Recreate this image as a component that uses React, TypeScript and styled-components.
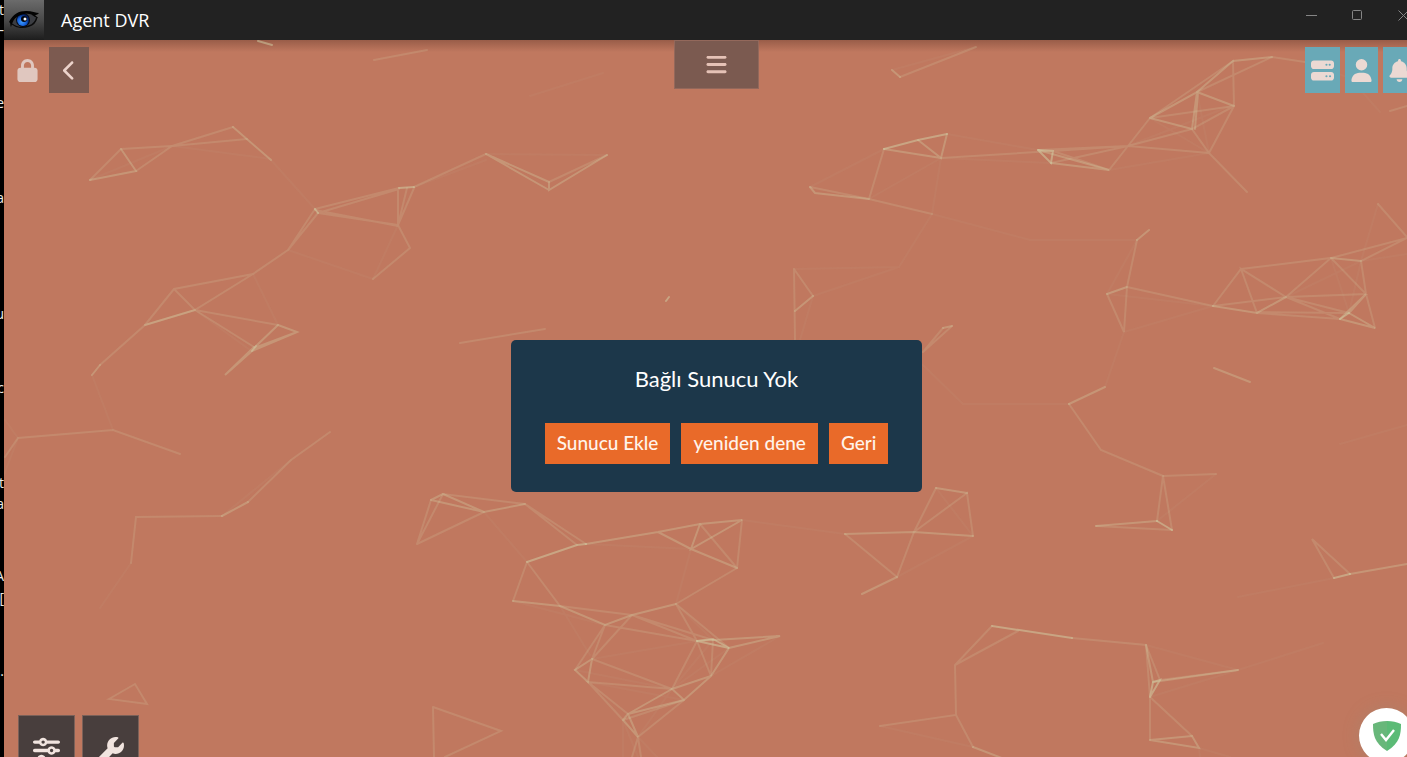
import React from "react";
import styled, { createGlobalStyle, css } from "styled-components";
import {
  FaBars,
  FaBell,
  FaChevronLeft,
  FaLock,
  FaServer,
  FaSliders,
  FaUser,
  FaWrench,
} from "react-icons/fa6";

const GlobalStyle = createGlobalStyle`
  * { box-sizing: border-box; }
  body {
    margin: 0;
    background: #000;
    font-family: Lato, "Liberation Sans", sans-serif;
    overflow: hidden;
  }
  button { font: inherit; margin: 0; padding: 0; border: 0; cursor: pointer; }
`;

const Desktop = styled.div`
  display: grid;
  grid-template-columns: 4px minmax(0, 1fr);
  height: 100vh;
  overflow: hidden;
`;

/* Slice of the window behind, of which only the right edge shows. */
const BehindStrip = styled.aside`
  overflow: hidden;
  background: #000;
  color: #e8e8e8;
  font: 14px/20px "Open Sans", "Liberation Sans", sans-serif;
`;

const BehindLine = styled.div<{ $gap: number }>`
  display: flex;
  justify-content: flex-end;
  height: 20px;
  margin-top: ${(p) => p.$gap}px;
`;

/* The application window runs past the right and bottom edges of the screen. */
const AppWindow = styled.div`
  display: flex;
  flex-direction: column;
  width: calc(100% + 22px);
  height: calc(100vh + 35px);
`;

const TitleBar = styled.header`
  display: flex;
  align-items: center;
  height: 40px;
  padding-right: 3px;
  background: #222;
  color: #fff;
`;

const AppIcon = styled.svg`
  width: 40px;
  height: 40px;
`;

const AppTitle = styled.h1`
  flex: 1;
  margin: 0 0 0 17px;
  font: 400 18px/24px "Open Sans", "Liberation Sans", sans-serif;
`;

const CaptionButton = styled.button`
  width: 46px;
  height: 30px;
  margin-bottom: 10px;
  background: transparent;
  color: #868686;
  svg { display: block; margin: 0 auto; }
`;

const Stage = styled.main`
  position: relative;
  flex: 1;
  display: flex;
  flex-direction: column;
  justify-content: space-between;
  background: linear-gradient(rgba(70, 35, 25, 0.32), rgba(70, 35, 25, 0) 12px), #c0785f;
`;

const Mesh = styled.svg`
  position: absolute;
  inset: 0;
  width: 100%;
  height: 100%;
  fill: none;
  stroke: #d2d2a8;
  stroke-width: 2;
  stroke-linecap: round;
`;

const TopBar = styled.nav`
  position: relative;
  display: grid;
  grid-template-columns: 1fr auto 1fr;
  align-items: start;
  padding: 0 13px;
`;

const ToolGroup = styled.div<{ $end?: boolean }>`
  display: flex;
  gap: ${(p) => (p.$end ? 5 : 12)}px;
  justify-content: ${(p) => (p.$end ? "flex-end" : "flex-start")};
  padding-top: 7px;
`;

const tones = {
  plain: css`background: transparent; color: #e0c7bf;`,
  brown: css`background: #7c5a50; color: #ecd3cb;`,
  teal: css`background: #69a9b7; color: #ecd9d3;`,
};

const ToolButton = styled.button<{ $tone: keyof typeof tones; $width: number; $icon?: number }>`
  display: flex;
  align-items: center;
  justify-content: center;
  width: ${(p) => p.$width}px;
  height: 46px;
  ${(p) => tones[p.$tone]}
  svg {
    flex: none;
    width: ${(p) => p.$icon ?? 23}px;
    height: ${(p) => p.$icon ?? 23}px;
  }
`;

const MenuButton = styled.button`
  display: flex;
  align-items: center;
  justify-content: center;
  width: 85px;
  height: 49px;
  border: 1px solid #93685b;
  background: #7b5a50;
  color: #e5c2b6;
  svg { width: 23px; height: 23px; }
`;

const BottomBar = styled.div`
  position: relative;
  display: flex;
  align-items: flex-end;
  gap: 7px;
  padding: 0 15px 7px 14px;
`;

const DockButton = styled.button`
  display: flex;
  align-items: center;
  justify-content: center;
  width: 57px;
  height: 70px;
  border: 1px solid #7b6159;
  background: #483e3d;
  color: #f1e4df;
  svg { width: 27px; height: 27px; }
`;

const ShieldBadge = styled.button`
  display: flex;
  align-items: center;
  justify-content: center;
  width: 55px;
  height: 55px;
  margin: 0 0 22px auto;
  border-radius: 50%;
  background: #fff;
  box-shadow: 0 0 16px rgba(150, 140, 120, 0.35);
`;

const DialogLayer = styled.div`
  position: absolute;
  inset: 0;
  display: flex;
  align-items: center;
  justify-content: center;
  pointer-events: none;
`;

const DialogCard = styled.section`
  padding: 24px 34px 28px;
  border-radius: 5px;
  background: #1c374a;
  color: #fff;
  pointer-events: auto;
`;

const DialogTitle = styled.h2`
  margin: 0 0 29px;
  font-size: 22px;
  font-weight: 400;
  line-height: 30px;
  text-align: center;
`;

const DialogActions = styled.div`
  display: flex;
  gap: 11px;
`;

const ActionButton = styled.button`
  height: 41px;
  padding: 0 12px 2px;
  background: #e96a29;
  color: #fff3ea;
  font-size: 19px;
  font-weight: 500;
  line-height: 24px;
`;

/* Mesh polylines in screen coordinates, grouped by how strongly they show. */
const meshLayers: { opacity: number; lines: string[] }[] = [
  {
    opacity: 0.06,
    lines: [
      "M90 180L172 146M271 160L315 209M172 146L271 159M398 225L373 279M288 250L373 279M253 274L278 325M195 310L250 350M92 375L113 430M486 154L607 155M414 187L486 160",
      "M530 96L603 73M18 438L4 475M5 420L18 438M291 460L222 516M131 563L100 608",
      "M810 187L884 149M941 158L869 199M941 158L932 214M941 158L1051 163M947 134L1038 150M1109 170L1209 153M1128 146L1233 105M1197 92L1209 153M1150 118L1209 153",
      "M932 214L1030 240L1137 240M932 214L899 267L794 269M899 267L813 296M1137 240L1107 294M1127 287L1107 294L1213 306L1124 332L1105 387M1069 404L963 404L923 365M813 296L800 340",
      "M1286 297L1361 261L1349 313M1331 258L1349 313M1378 204L1361 261M1361 261L1407 254M1340 444L1407 425M1305 62L1350 78L1380 112",
      "M484 512L527 562M586 544L691 549L676 604M513 601L605 625M560 606L590 655M592 659L697 641M588 682L684 700M575 670L672 689M780 636L711 676M672 689L729 648M672 689L713 640M638 737L672 689M638 737L657 757M623 720L623 757M623 720L638 757M742 520L845 534M676 604L713 640",
      "M897 577L973 536M936 488L973 536M1216 474L1157 521M1334 578L1238 597M880 726L973 747M1150 697L1238 670L1323 643M1146 645L1238 670M1199 748L1200 757M1199 748L1230 757M892 70L976 47",
    ],
  },
  {
    opacity: 0.19,
    lines: [
      "M90 180L121 149L172 146L136 171M172 146L233 127M172 146L247 139M315 209L399 188M318 213L399 189M318 213L398 225M315 210L398 226M398 188L398 225L414 188M407 188L398 225L410 248L373 279",
      "M318 213L288 250L315 209M288 250L253 274L174 289L145 325L100 365M253 274L195 310L278 325M195 310L254 347M145 325L195 310L174 289M374 60L427 50M414 187L486 154M549 182L607 155M460 343L545 329M900 77L976 47",
      "M5 457L18 438L113 430L180 454M330 432L291 460L248 502M222 516L136 517L131 563",
      "M884 149L869 199L932 214M810 187L869 199M941 158L1053 151M1038 150L1128 146L1053 151M1051 163L1128 146L1209 153L1247 192M1053 151L1109 170L1128 146L1150 118M1128 146L1192 129M1150 118L1234 106L1192 129L1209 153L1234 106L1233 61L1150 118M1197 92L1272 57L1305 62",
      "M794 269L795 340M794 269L813 296M923 352L943 328M952 326L923 352M1137 240L1127 287L1124 332L1107 294M1127 287L1213 306M1069 404L1101 450L1163 476L1157 521M1163 476L1172 530",
      "M1213 306L1241 269L1331 258L1286 297L1241 269L1257 313L1340 319M1257 312L1349 313M1213 306L1286 297L1366 294L1331 258L1407 238L1361 261L1366 294L1375 328M1286 297L1340 319M1286 297L1349 313M1378 204L1407 237M1390 111L1407 106",
      "M431 500L417 544L443 494L525 504L586 544M417 544L484 512M525 504L577 545M742 520L737 568L676 604M700 524L737 568M527 562L513 601M527 562L560 606L632 615M605 625L575 670M605 625L592 659L632 615L697 641L605 625M632 615L713 640M676 604L697 641L672 689M676 604L729 648",
      "M697 641L711 676L713 640M592 659L672 689L588 682L628 714M588 682L623 720L684 700M638 737L684 700M638 737L632 757M638 737L641 757M433 707L501 731L445 757M433 707L434 757",
      "M845 534L897 577L914 532L936 488M914 532L967 493L973 536M1096 526L1172 530M1163 476L1216 474M1334 578L1312 539L1350 574M992 626L955 665L1018 631M955 665L956 715L880 726M956 715L973 747M1072 638L1146 645L1150 697L1192 736M1160 680L1146 645M1150 697L1150 740M1160 680L1238 670M109 699L135 684L147 704Z",
    ],
  },
  {
    opacity: 0.32,
    lines: [
      "M121 149L136 171L90 180M233 127L271 160M195 310L145 325M278 325L297 332L254 348L278 325M297 332L252 351L225 375L254 347M100 365L92 375M486 154L549 190M486 154L549 182L549 190L607 155M248 502L222 516",
      "M941 158L884 149M918 140L941 158L947 134M810 187L815 193L869 199M1051 163L1109 170L1038 150M1150 118L1192 129L1197 92L1150 118M1198 92L1195 129M1197 92L1234 106M1197 92L1233 61L1272 57M1137 240L1149 230M1127 287L1107 294M795 311L813 296M943 328L952 326M1105 387L1069 404M1214 368L1250 382M892 70L900 77",
      "M1213 306L1257 313L1286 297M1331 258L1361 261M1340 319L1366 294L1349 313L1375 328L1340 319",
      "M431 500L484 512L525 504M443 494L484 512M431 500L443 494M586 544L658 532L700 524L742 520L691 549L700 524M658 532L691 549L737 568M513 601L560 606L605 625L632 615L676 604M592 659L575 670L588 682L592 659M697 641L780 636L729 648L711 676L672 689L684 700L711 676M672 689L628 714L684 700M628 714L623 720L638 737L628 714",
      "M845 534L914 532L973 536M897 577L862 594M936 488L967 493M1096 526L1157 521M1350 574L1407 564M973 747L1007 760M1153 682L1146 645M1153 682L1238 670M1150 740L1192 736L1199 748L1150 740",
    ],
  },
  {
    opacity: 0.5,
    lines: [
      "M399 188L414 187M315 209L318 213M252 351L256 346M258 41L272 45M666 301L669 297M884 149L918 140L947 134M1038 150L1053 151L1051 163L1038 150",
      "M527 562L577 545L586 544M697 641L713 639L729 648L697 641M992 626L1072 638M1157 521L1172 530M1334 578L1350 574M1150 697L1153 682L1160 680L1150 697M1340 319L1349 313",
    ],
  },
];

const behindText = [
  { text: "t", gap: 0 },
  { text: "–", gap: 0 },
  { text: "e", gap: 53 },
  { text: "a", gap: 75 },
  { text: "u", gap: 96 },
  { text: "c", gap: 54 },
  { text: "et", gap: 75 },
  { text: "a", gap: 1 },
  { text: "A", gap: 52 },
  { text: "[", gap: 2 },
  { text: ".", gap: 53 },
];

function EyeLogo() {
  return (
    <AppIcon viewBox="0 0 40 40" aria-hidden="true">
      <defs>
        <linearGradient id="tile" x1="0" y1="0" x2="0" y2="1">
          <stop offset="0" stopColor="#6b6b6b" />
          <stop offset="0.5" stopColor="#4a4a4a" />
          <stop offset="1" stopColor="#1d1d1d" />
        </linearGradient>
        <radialGradient id="iris" cx="0.4" cy="0.65" r="0.6">
          <stop offset="0" stopColor="#3d9bff" />
          <stop offset="0.6" stopColor="#1560d8" />
          <stop offset="1" stopColor="#041f5c" />
        </radialGradient>
      </defs>
      <rect width="40" height="40" fill="url(#tile)" />
      <path d="M8 24C11 17 17 14 23 14C29 14 32 17 33 19C31 24 26 27 20 27C15 27 11 26 8 24Z" fill="#3b3d42" />
      <circle cx="19" cy="20" r="7" fill="#050a18" />
      <circle cx="19" cy="20" r="6" fill="url(#iris)" />
      <circle cx="20" cy="19" r="3" fill="#02040a" />
      <circle cx="21" cy="19" r="1.5" fill="#fff" />
      <path d="M5 22C9 14 15 11 22 11C28 11 32 13 35 13C33 15 32 15 31 15L34 18L31 17C28 14 24 13 20 14C14 15 10 18 8 24L7 27C6 25 7 23 5 22Z" fill="#030303" />
      <path d="M8 24C13 28 20 28 25 26C29 25 32 21 33 17" fill="none" stroke="#0a0a0a" strokeWidth="1.4" />
    </AppIcon>
  );
}

function Shield() {
  return (
    <svg width="28" height="30" viewBox="0 0 28 30" aria-hidden="true">
      <path d="M14 0C9 0 4 1 0 3C0 13 1 22 14 30Z" fill="#68b77a" />
      <path d="M14 0C19 0 24 1 28 3C28 13 27 22 14 30Z" fill="#5bbb76" />
      <path d="M8 13L13 19L21 9" fill="none" stroke="#fff" strokeWidth="2.4" />
    </svg>
  );
}

export default function App() {
  return (
    <>
      <GlobalStyle />
      <Desktop>
        <BehindStrip aria-hidden="true">
          {behindText.map((line, i) => (
            <BehindLine key={i} $gap={line.gap}>{line.text}</BehindLine>
          ))}
        </BehindStrip>
        <AppWindow>
          <TitleBar>
            <EyeLogo />
            <AppTitle>Agent DVR</AppTitle>
            <CaptionButton aria-label="Minimize">
              <svg width="11" height="11" stroke="currentColor"><path d="M0 5.5H11" /></svg>
            </CaptionButton>
            <CaptionButton aria-label="Maximize">
              <svg width="11" height="11" stroke="currentColor" fill="none"><rect x="0.5" y="0.5" width="9" height="9" rx="1" /></svg>
            </CaptionButton>
            <CaptionButton aria-label="Close">
              <svg width="11" height="11" stroke="currentColor"><path d="M0.5 0.5L10.5 10.5M10.5 0.5L0.5 10.5" /></svg>
            </CaptionButton>
          </TitleBar>
          <Stage>
            <Mesh viewBox="4 40 1425 752" preserveAspectRatio="xMinYMin slice" aria-hidden="true">
              {meshLayers.map((layer) => (
                <g key={layer.opacity} strokeOpacity={layer.opacity}>
                  {layer.lines.map((d) => <path key={d} d={d} />)}
                </g>
              ))}
            </Mesh>
            <TopBar>
              <ToolGroup>
                <ToolButton $tone="plain" $width={20} aria-label="Lock"><FaLock /></ToolButton>
                <ToolButton $tone="brown" $width={40} $icon={21} aria-label="Back"><FaChevronLeft /></ToolButton>
              </ToolGroup>
              <MenuButton aria-label="Menu"><FaBars /></MenuButton>
              <ToolGroup $end>
                <ToolButton $tone="teal" $width={35} aria-label="Servers"><FaServer /></ToolButton>
                <ToolButton $tone="teal" $width={33} aria-label="Account"><FaUser /></ToolButton>
                <ToolButton $tone="teal" $width={33} aria-label="Notifications"><FaBell /></ToolButton>
              </ToolGroup>
            </TopBar>
            <BottomBar>
              <DockButton aria-label="Controls"><FaSliders /></DockButton>
              <DockButton aria-label="Settings"><FaWrench /></DockButton>
              <ShieldBadge aria-label="Protection"><Shield /></ShieldBadge>
            </BottomBar>
            <DialogLayer>
              <DialogCard role="dialog" aria-labelledby="dialog-title">
                <DialogTitle id="dialog-title">Bağlı Sunucu Yok</DialogTitle>
                <DialogActions>
                  <ActionButton>Sunucu Ekle</ActionButton>
                  <ActionButton>yeniden dene</ActionButton>
                  <ActionButton>Geri</ActionButton>
                </DialogActions>
              </DialogCard>
            </DialogLayer>
          </Stage>
        </AppWindow>
      </Desktop>
    </>
  );
}
